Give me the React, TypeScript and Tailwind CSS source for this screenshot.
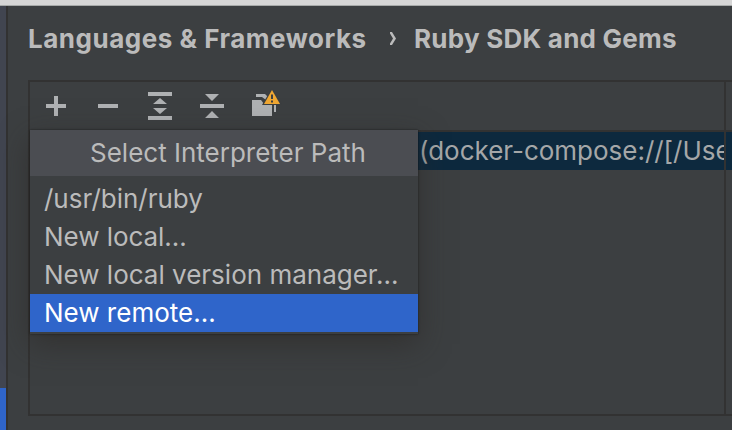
import React from "react";

const items = [
  { label: "/usr/bin/ruby", cls: "text-[#bbbbbb]" },
  { label: "New local...", cls: "text-[#bbbbbb] tracking-[-0.05px]" },
  { label: "New local version manager...", cls: "text-[#bbbbbb]" },
  { label: "New remote...", cls: "bg-[#2f65ca] text-white" },
];

function Toolbar() {
  return (
    <div className="h-[48px] w-full shrink-0">
      <svg width="280" height="48" viewBox="30 82 280 48" fill="#afb1b3">
        <path d="M54 96h4v8h8v4h-8v8h-4v-8h-8v-4h8z" />
        <path d="M98 104h20v4H98z" />
        <path d="M148 92h24v4h-24zM148 116h24v4h-24zM160 98l7 6h-14zM160 114l7-6h-14z" />
        <path d="M200 104h24v4h-24zM205 94h14l-7 7zM205 118h14l-7-7z" />
        <path d="M256 94h9l4 4h7v14h-2v-12h-8l-4-3h-6z" />
        <path d="M252 100h9l3 4h8v12h-20z" />
        <path d="M272 88l10 17h-20z" fill="#3c3f41" />
        <path d="M272 90l8 14h-16z" fill="#f0a732" />
        <path d="M271 94.500h2v4.500h-2zM271 100.500h2v2h-2z" fill="#3c3f41" />
      </svg>
    </div>
  );
}

export default function App() {
  return (
    <div className="flex h-[430px] w-[732px] flex-col overflow-hidden bg-[#3c3f41] font-['Inter',sans-serif] text-[26px] text-[#bbbbbb]">
      <div className="h-[6px] shrink-0 border-b border-[#a7aaa9] bg-[#d6d6d6]" />
      <div className="flex min-h-0 flex-1">
        <div className="flex w-[8px] shrink-0 flex-col border-r-2 border-[#323232] bg-[#414550]">
          <div className="flex-1" />
          <div className="h-[42px] bg-[#2f65ca]" />
        </div>
        <div className="flex min-w-0 flex-1 flex-col pl-5">
          <div className="flex h-[74px] shrink-0 items-start whitespace-nowrap pt-[14px] font-bold leading-[38px]">
            <span className="w-[360px] tracking-[0.52px]">Languages &amp; Frameworks</span>
            <svg width="26" height="38" viewBox="0 0 26 38" fill="#bbbbbb">
              <path d="M2 12h2l4 6.500-4 6.500H2v-1.500l3-5-3-5z" />
            </svg>
            <span className="tracking-[0.24px]">Ruby SDK and Gems</span>
          </div>
          <div className="relative flex h-[336px] w-[704px] border-y-2 border-l-2 border-[#323232]">
            <div className="flex w-[694px] shrink-0 flex-col">
              <Toolbar />
              <div className="h-[2px] shrink-0 bg-[#323232]" />
              <div className="flex h-[38px] justify-end whitespace-nowrap bg-[#0d293e] leading-[38px] text-[#a5a7a8]">
                <span className="w-[305px] tracking-[-0.02px]">(docker-compose://[/Use</span>
              </div>
            </div>
            <div className="w-[2px] shrink-0 bg-[#323232]" />
            <div className="flex-1 pt-[48px]">
              <div className="h-[40px] border-t-2 border-[#323232] bg-[#0d293e]" />
            </div>
            <div className="absolute left-0 top-[48px] flex h-[204px] w-[388px] flex-col bg-[#3c3f41] shadow-[0_0_2px_rgba(0,0,0,0.55),0_10px_28px_rgba(42,38,34,0.55)]">
              <div className="mb-1 h-[46px] bg-[#4b4d52] pl-[60px] leading-[46px]">
                <span>Select Interpreter Path</span>
              </div>
              {items.map((item) => (
                <div key={item.label} className={"h-[38px] whitespace-nowrap pl-[14px] leading-[38px] " + item.cls}>
                  <span>{item.label}</span>
                </div>
              ))}
            </div>
          </div>
        </div>
      </div>
    </div>
  );
}
